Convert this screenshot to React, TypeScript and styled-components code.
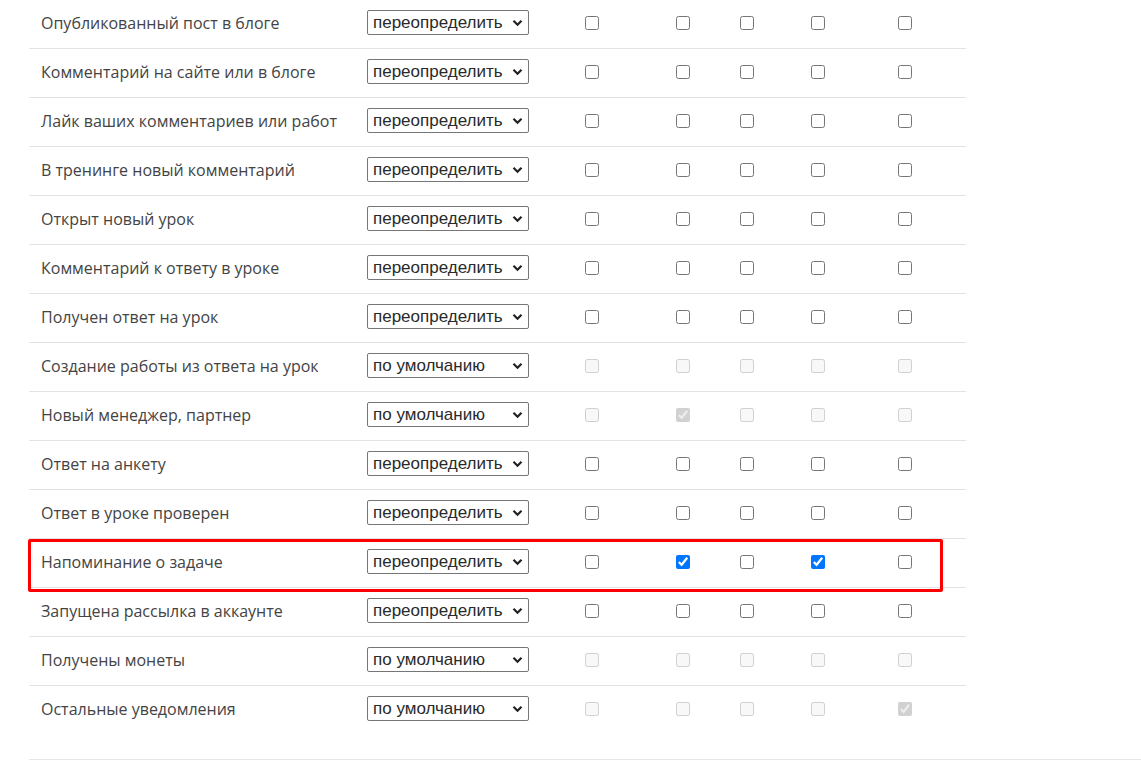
import React from 'react';
import styled, { createGlobalStyle } from 'styled-components';

type Mode = 'override' | 'default';

interface Row {
  title: string;
  mode: Mode;
  checked: number[];
  highlight?: boolean;
}

const rows: Row[] = [
  { title: 'Опубликованный пост в блоге', mode: 'override', checked: [] },
  { title: 'Комментарий на сайте или в блоге', mode: 'override', checked: [] },
  { title: 'Лайк ваших комментариев или работ', mode: 'override', checked: [] },
  { title: 'В тренинге новый комментарий', mode: 'override', checked: [] },
  { title: 'Открыт новый урок', mode: 'override', checked: [] },
  { title: 'Комментарий к ответу в уроке', mode: 'override', checked: [] },
  { title: 'Получен ответ на урок', mode: 'override', checked: [] },
  { title: 'Создание работы из ответа на урок', mode: 'default', checked: [] },
  { title: 'Новый менеджер, партнер', mode: 'default', checked: [1] },
  { title: 'Ответ на анкету', mode: 'override', checked: [] },
  { title: 'Ответ в уроке проверен', mode: 'override', checked: [] },
  { title: 'Напоминание о задаче', mode: 'override', checked: [1, 3], highlight: true },
  { title: 'Запущена рассылка в аккаунте', mode: 'override', checked: [] },
  { title: 'Получены монеты', mode: 'default', checked: [] },
  { title: 'Остальные уведомления', mode: 'default', checked: [4] },
];

const CHANNELS = 5;

const GlobalStyle = createGlobalStyle`
  html, body {
    margin: 0;
    padding: 0;
    background: #fff;
  }
  body {
    font-family: "Open Sans", "Liberation Sans", sans-serif;
    color: #333;
  }
`;

const Page = styled.div`
  padding-left: 29px;
  width: 1112px;
`;

const Table = styled.div`
  width: 937px;
`;

const RowWrap = styled.div<{ $last: boolean }>`
  position: relative;
  display: grid;
  grid-template-columns: 338px 162px 126px 56px 72px 70px 104px;
  align-items: center;
  height: 48px;
  border-bottom: 1px solid ${p => (p.$last ? 'transparent' : '#e3e3e3')};
`;

const Label = styled.div`
  padding-left: 12px;
  font-size: 16px;
  color: #444;
  margin-top: -3px;
`;

const SelectWrap = styled.div`
  position: relative;
  width: 162px;
  height: 25px;
  margin-top: -3px;
`;

const ModeSelect = styled.select`
  appearance: none;
  -webkit-appearance: none;
  box-sizing: border-box;
  width: 162px;
  height: 25px;
  padding: 0 0 0 5px;
  font-family: "Liberation Sans", Arial, sans-serif;
  font-size: 17px;
  line-height: 23px;
  color: #2a2a2a;
  background: #fff;
  border: 1px solid #767676;
  border-radius: 2px;
  outline: none;
`;

const Chevron = styled.svg`
  position: absolute;
  right: 6px;
  top: 9px;
  width: 11px;
  height: 8px;
  pointer-events: none;
`;

const Cell = styled.div`
  display: flex;
  justify-content: center;
  margin-top: -3px;
`;

const Box = styled.input`
  width: 14px;
  height: 14px;
  margin: 0;
`;

const Highlight = styled.div`
  position: absolute;
  left: -1px;
  top: 0;
  width: 915px;
  height: 53px;
  border: 3px solid #ff0000;
  border-radius: 2px;
  box-sizing: border-box;
  pointer-events: none;
`;

const Footer = styled.div`
  margin-top: 24px;
  border-top: 1px solid #e6e6e6;
  height: 10px;
`;

const NotificationRow = ({ row, last }: { row: Row; last: boolean }) => {
  const disabled = row.mode === 'default';
  return (
    <RowWrap $last={last}>
      <Label>{row.title}</Label>
      <SelectWrap>
        <ModeSelect defaultValue={row.mode}>
          <option value="default">по умолчанию</option>
          <option value="override">переопределить</option>
        </ModeSelect>
        <Chevron viewBox="0 0 11 8">
          <path d="M1.5 1.8 L5.5 5.8 L9.5 1.8" fill="none" stroke="#222" strokeWidth="2.2" />
        </Chevron>
      </SelectWrap>
      {Array.from({ length: CHANNELS }).map((_, i) => (
        <Cell key={i}>
          <Box type="checkbox" disabled={disabled} defaultChecked={row.checked.includes(i)} />
        </Cell>
      ))}
      {row.highlight && <Highlight />}
    </RowWrap>
  );
};

export default function App() {
  return (
    <>
      <GlobalStyle />
      <Page>
        <Table>
          {rows.map((r, i) => (
            <NotificationRow key={r.title} row={r} last={i === rows.length - 1} />
          ))}
        </Table>
        <Footer />
      </Page>
    </>
  );
}
